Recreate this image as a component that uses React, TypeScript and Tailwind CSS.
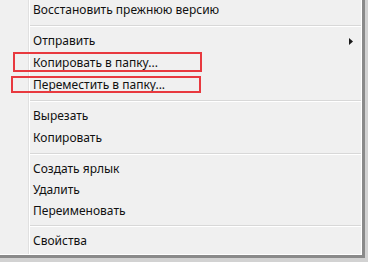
import React from "react";

type Entry =
  | { kind: "item"; label: string; h?: string; arrow?: boolean }
  | { kind: "sep" };

const ENTRIES: Entry[] = [
  { kind: "item", label: "Восстановить прежнюю версию", h: "h-[22px]" },
  { kind: "sep" },
  { kind: "item", label: "Отправить", arrow: true },
  { kind: "item", label: "Копировать в папку..." },
  { kind: "item", label: "Переместить в папку..." },
  { kind: "sep" },
  { kind: "item", label: "Вырезать" },
  { kind: "item", label: "Копировать" },
  { kind: "sep" },
  { kind: "item", label: "Создать ярлык", h: "h-[21px]" },
  { kind: "item", label: "Удалить", h: "h-[21px]" },
  { kind: "item", label: "Переименовать", h: "h-[21px]" },
  { kind: "sep" },
  { kind: "item", label: "Свойства" },
];

function MenuRow({ label, h, arrow }: { label: string; h?: string; arrow?: boolean }) {
  return (
    <div className={`${h ?? "h-[22px]"} flex items-center pl-[33px] pr-[16px]`}>
      <span className="flex-1 leading-[22px] whitespace-nowrap">{label}</span>
      {arrow && (
        <svg width="4" height="7" viewBox="0 0 4 7" className="mr-[-8px]" aria-hidden="true">
          <path d="M0 0 L4 3.5 L0 7 Z" fill="#1a1a1a" />
        </svg>
      )}
    </div>
  );
}

function Separator() {
  return (
    <div className="h-[9px] flex flex-col justify-center pl-[30px]">
      <div className="h-px bg-[#d8d8d8]" />
      <div className="h-px bg-white" />
    </div>
  );
}

export default function App() {
  return (
    <div className="w-[368px] h-[262px] bg-[#d2d2d2] overflow-hidden relative">
      <div className="w-[365px] h-[259px] border-r-[3px] border-b-[3px] border-[#8a8a8a]">
        <div
          className="relative h-full bg-[#f0f0f0] border-r border-b border-white text-[12px] text-[#111]"
          style={{ fontFamily: '"Noto Sans", "Open Sans", sans-serif' }}
        >
          {/* gutter */}
          <div className="absolute left-[28px] top-0 bottom-0 w-px bg-[#e0e0e0]" />
          <div className="absolute left-[29px] top-0 bottom-0 w-px bg-white" />

          <div className="relative flex flex-col -mt-[1px]">
            {ENTRIES.map((e, i) =>
              e.kind === "sep" ? (
                <Separator key={i} />
              ) : (
                <MenuRow key={i} label={e.label} h={e.h} arrow={e.arrow} />
              )
            )}
          </div>
        </div>
      </div>

      {/* annotation boxes */}
      <div className="absolute left-[13px] top-[52px] w-[189px] h-[20px] border-2 border-[#e8393f]" />
      <div className="absolute left-[11px] top-[76px] w-[190px] h-[17px] border-2 border-[#e8393f]" />
    </div>
  );
}
